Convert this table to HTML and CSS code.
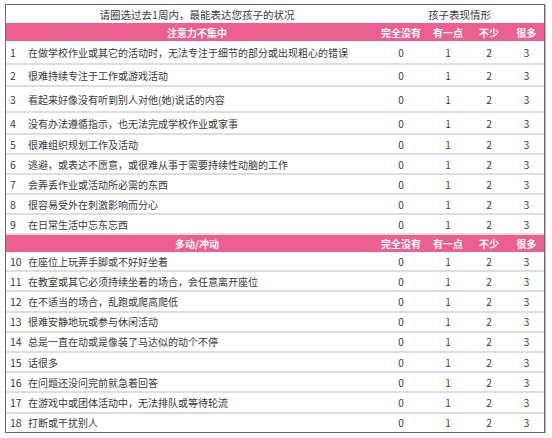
FILE: index.html
```html
<!DOCTYPE html>
<html lang="zh">
<head>
<meta charset="utf-8">
<link rel="stylesheet" href="styles.css">
</head>
<body>
<div class="sheet">
  <div class="row head">
    <div class="title">请圈选过去1周内，最能表达您孩子的状况</div>
    <div class="span4">孩子表现情形</div>
  </div>
  <div class="row band">
    <div class="band-title">注意力不集中</div>
    <div>完全没有</div><div>有一点</div><div>不少</div><div>很多</div>
  </div>
  <div class="row h1"><div class="item"><span class="num">1</span>在做学校作业或其它的活动时，无法专注于细节的部分或出现粗心的错误</div><div>0</div><div>1</div><div>2</div><div>3</div></div>
  <div class="row h2"><div class="item"><span class="num">2</span>很难持续专注于工作或游戏活动</div><div>0</div><div>1</div><div>2</div><div>3</div></div>
  <div class="row h3"><div class="item"><span class="num">3</span>看起来好像没有听到别人对他(她)说话的内容</div><div>0</div><div>1</div><div>2</div><div>3</div></div>
  <div class="row h2"><div class="item"><span class="num">4</span>没有办法遵循指示，也无法完成学校作业或家事</div><div>0</div><div>1</div><div>2</div><div>3</div></div>
  <div class="row h5"><div class="item"><span class="num">5</span>很难组织规划工作及活动</div><div>0</div><div>1</div><div>2</div><div>3</div></div>
  <div class="row h5"><div class="item"><span class="num">6</span>逃避，或表达不愿意，或很难从事于需要持续性动脑的工作</div><div>0</div><div>1</div><div>2</div><div>3</div></div>
  <div class="row h5"><div class="item"><span class="num">7</span>会弄丢作业或活动所必需的东西</div><div>0</div><div>1</div><div>2</div><div>3</div></div>
  <div class="row h5"><div class="item"><span class="num">8</span>很容易受外在刺激影响而分心</div><div>0</div><div>1</div><div>2</div><div>3</div></div>
  <div class="row h5"><div class="item"><span class="num">9</span>在日常生活中忘东忘西</div><div>0</div><div>1</div><div>2</div><div>3</div></div>
  <div class="row band band2">
    <div class="band-title">多动/冲动</div>
    <div>完全没有</div><div>有一点</div><div>不少</div><div>很多</div>
  </div>
  <div class="row h10"><div class="item"><span class="num">10</span>在座位上玩弄手脚或不好好坐着</div><div>0</div><div>1</div><div>2</div><div>3</div></div>
  <div class="row h10"><div class="item"><span class="num">11</span>在教室或其它必须持续坐着的场合，会任意离开座位</div><div>0</div><div>1</div><div>2</div><div>3</div></div>
  <div class="row h10"><div class="item"><span class="num">12</span>在不适当的场合，乱跑或爬高爬低</div><div>0</div><div>1</div><div>2</div><div>3</div></div>
  <div class="row h10"><div class="item"><span class="num">13</span>很难安静地玩或参与休闲活动</div><div>0</div><div>1</div><div>2</div><div>3</div></div>
  <div class="row h10"><div class="item"><span class="num">14</span>总是一直在动或是像装了马达似的动个不停</div><div>0</div><div>1</div><div>2</div><div>3</div></div>
  <div class="row h10"><div class="item"><span class="num">15</span>话很多</div><div>0</div><div>1</div><div>2</div><div>3</div></div>
  <div class="row h10"><div class="item"><span class="num">16</span>在问题还没问完前就急着回答</div><div>0</div><div>1</div><div>2</div><div>3</div></div>
  <div class="row h10"><div class="item"><span class="num">17</span>在游戏中或团体活动中，无法排队或等待轮流</div><div>0</div><div>1</div><div>2</div><div>3</div></div>
  <div class="row h10 last"><div class="item"><span class="num">18</span>打断或干扰别人</div><div>0</div><div>1</div><div>2</div><div>3</div></div>
</div>
</body>
</html>
```
FILE: styles.css
```css
html, body {
  margin: 0;
  padding: 0;
  background: #ffffff;
}
body {
  font-family: "Noto Sans CJK SC", "Noto Sans", sans-serif;
  font-size: 10px;
  color: #3a3a3a;
}
.sheet {
  margin: 4px 0 0 5px;
  width: 538px;
  border: 1px solid #6a6a6a;
  box-shadow: 1px 1px 0 #bdbdbd;
}
.row {
  display: grid;
  grid-template-columns: 369px 52px 42px 40px 1fr;
  align-items: center;
  border-bottom: 2px solid #dedede;
}
.row > div {
  text-align: center;
}
.row.last { border-bottom: none; }
.head {
  height: 18px;
  border-bottom: none;
  font-size: 10.5px;
}
.head .title {
  padding-left: 13px;
}
.head .span4 {
  grid-column: 2 / 6;
}
.band {
  height: 18px;
  background: #ec5f8f;
  color: #ffffff;
  font-weight: bold;
  border-bottom: none;
}
.band2 { height: 17px; }
.band .band-title {
  padding-left: 13px;
}
.row .item {
  text-align: left;
  display: flex;
  align-items: center;
}
.num {
  display: inline-block;
  width: 22px;
  padding-left: 4px;
  box-sizing: border-box;
  font-size: 10.5px;
}
.h1 { height: 22px; }
.h2 { height: 20px; }
.h3 { height: 24px; }
.h5 { height: 18px; }
.h10 { height: 18.2px; }
```
